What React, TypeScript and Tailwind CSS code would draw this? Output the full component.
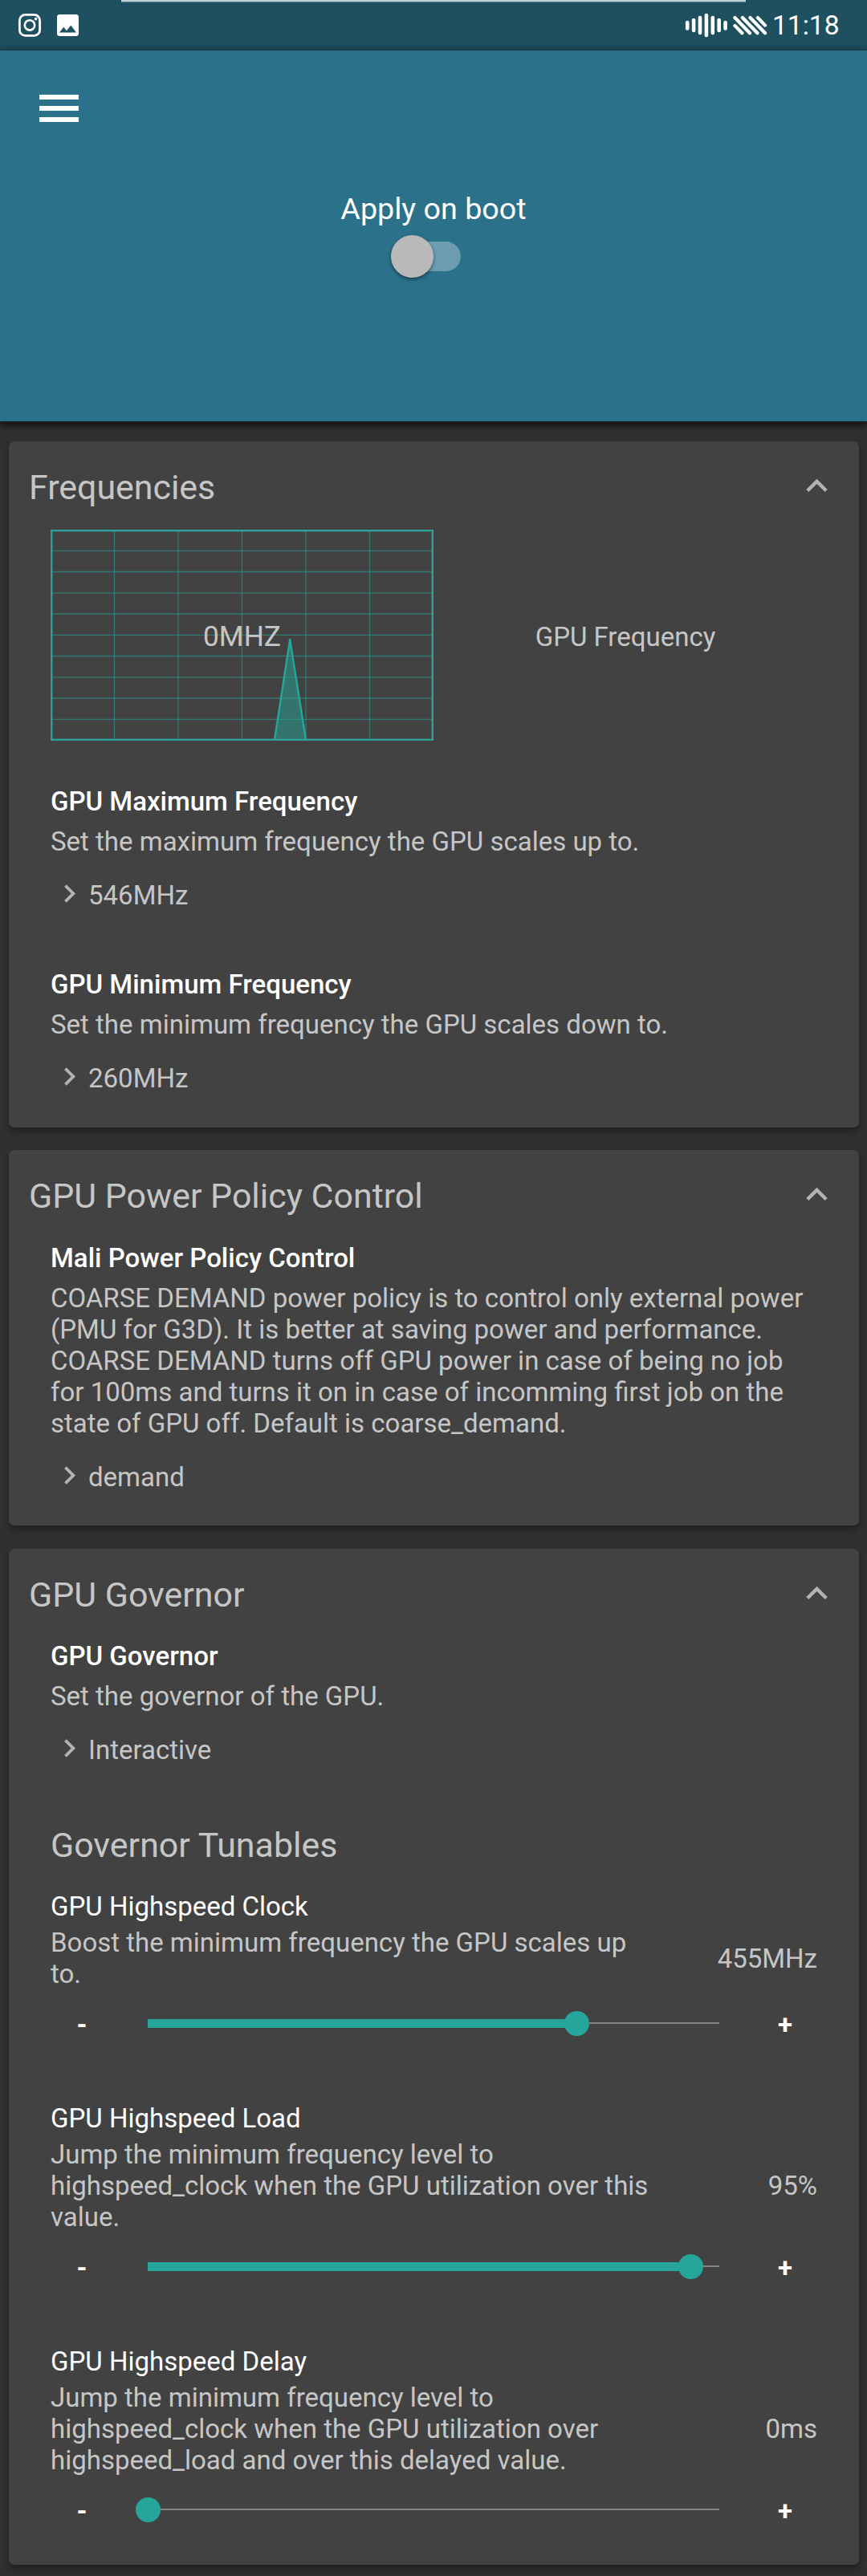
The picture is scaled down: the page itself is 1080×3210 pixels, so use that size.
import React from "react";

const Chevron = ({ up = false, className = "" }: { up?: boolean; className?: string }) => (
  <svg viewBox="0 0 24 24" fill="#b3b3b3" className={className}>
    <path
      d={
        up
          ? "M12 8l-6 6 1.41 1.41L12 10.83l4.59 4.58L18 14z"
          : "M10 6L8.59 7.41 13.17 12l-4.58 4.59L10 18l6-6z"
      }
    />
  </svg>
);

const StatusBar = () => (
  <div className="relative flex h-[63px] items-center bg-[#1e5060] pl-[23px] pr-[36px]">
    <div className="absolute left-[151px] top-0 h-[3px] w-[778px] border-b border-[#587c89] bg-[#c2d1d7]" />
    <svg className="h-[29px] w-[28px]" viewBox="0 0 28 29" fill="none" stroke="#fff">
      <rect x="1.4" y="1.4" width="25.2" height="26" rx="7" strokeWidth="2.8" />
      <circle cx="14" cy="14.4" r="6.2" strokeWidth="2.6" />
      <circle cx="21.6" cy="6.6" r="1.8" fill="#fff" stroke="none" />
    </svg>
    <svg className="ml-5 h-[27px] w-[27px]" viewBox="3 3 18 18" fill="#fff">
      <path d="M21 19V5c0-1.1-.9-2-2-2H5c-1.1 0-2 .9-2 2v14c0 1.1.9 2 2 2h14c1.1 0 2-.9 2-2zM8.5 13.5l2.5 3.01L14.5 12l4.5 6H5l3.5-4.5z" fillRule="evenodd" />
    </svg>
    <div className="grow" />
    <svg className="h-[32px] w-[104px]" viewBox="851.5 16 104 32" stroke="#fff" strokeWidth="4.6" strokeLinecap="round" fill="none">
      <path d="M855.7 28v7.5M863.6 25v13M871.5 22v19M879.4 19v25M887.3 22v19M895.2 25v13M903.1 28v7.5" />
      <path d="M914.9 31.9l9 9.4M914.9 22l18.6 19.3M924.4 22l18.6 19.3M934 22l18.6 19.3M943.4 22l9.2 9.6" strokeWidth="4.2" />
    </svg>
    <span className="ml-[6px] w-[82px] whitespace-nowrap text-[33.6px] leading-[40px] text-white">11:18</span>
  </div>
);

const Header = () => (
  <div className="relative z-10 flex h-[462px] flex-col items-center bg-[#2a7189] shadow-[0_3px_10px_2px_rgba(0,0,0,0.65)]">
    <div className="flex h-[174px] w-full flex-col gap-2 pl-[49px] pt-[55px]">
      <div className="h-[6px] w-[49px] bg-white" />
      <div className="h-[6px] w-[49px] bg-white" />
      <div className="h-[6px] w-[49px] bg-white" />
    </div>
    <div className="h-[46px] text-[37.7px] leading-[46px] text-white">Apply on boot</div>
    <div className="mt-[9px] flex h-[54px] w-[106px] items-center">
      <div className="relative h-[37px] w-[87px] rounded-full bg-[#6b9caf]">
        <div className="absolute -top-2 left-0 h-[53px] w-[53px] rounded-full bg-[#b9b9b9] shadow-[0_2px_4px_rgba(0,0,0,0.45)]" />
      </div>
    </div>
  </div>
);

const Card = ({ title, children }: { title: string; children: React.ReactNode }) => (
  <section className="rounded-[7px] bg-[#424242] shadow-[0_5px_9px_rgba(0,0,0,0.35)]">
    <div className="flex h-[110px] items-start justify-between pl-[25px] pr-[26px] pt-[32px]">
      <h2 className="text-[42.9px] leading-[50px]">{title}</h2>
      <Chevron up className="-mt-[3px] h-[53px] w-[53px]" />
    </div>
    <div className="px-[52px]">{children}</div>
  </section>
);

const SelectItem = ({ title, text, value }: { title: string; text: string; value: string }) => (
  <div>
    <h3 className="font-medium text-white">{title}</h3>
    <p className="mt-[11px] whitespace-pre">{text}</p>
    <div className="mt-7 flex h-[39px] items-center">
      <Chevron className="-mt-[4px] ml-px h-[45px] w-[45px]" />
      <span className="ml-px">{value}</span>
    </div>
  </div>
);

const SliderItem = ({ title, text, value, thumb }: { title: string; text: string; value: string; thumb: number }) => (
  <div>
    <h3 className="text-white">{title}</h3>
    <div className="mt-[6px] flex items-center justify-between">
      <p className="whitespace-pre">{text}</p>
      <span>{value}</span>
    </div>
    <div className="mt-[18px] flex h-[48px] items-center">
      <span className="w-[78px] pt-[2px] text-center font-bold text-white">-</span>
      <div className="relative ml-[43px] flex h-[31px] w-[712px] items-center">
        <div className="h-[11px] bg-[#26a69a]" style={{ width: thumb }} />
        <div className="h-[2px] grow bg-[#858585]" />
        <div className="absolute top-0 -ml-[15.5px] h-[31px] w-[31px] rounded-full bg-[#26a69a]" style={{ left: thumb }} />
      </div>
      <span className="ml-[43px] w-[78px] pt-[3px] text-center font-bold text-white">+</span>
    </div>
  </div>
);

const vLines = [79.5, 159, 238.5, 318, 397.5];
const hLines = [26.3, 52.5, 78.8, 105, 131.3, 157.5, 183.8, 210, 236.3];

const FrequencyChart = () => (
  <div className="relative h-[263px] w-[477px]">
    <svg className="absolute inset-0 h-full w-full" viewBox="0 0 477 263" fill="none">
      <g stroke="#26a69a" strokeOpacity="0.55" strokeWidth="1.3">
        {vLines.map((x) => (
          <path key={x} d={`M${x} 0V263`} />
        ))}
        {hLines.map((y) => (
          <path key={y} d={`M0 ${y}H477`} />
        ))}
      </g>
      <path d="M279 262L298.2 137L318 262z" fill="#26a69a" fillOpacity="0.5" />
      <path d="M279 262L298.2 137L318 262" stroke="#26a69a" strokeWidth="2.4" strokeLinejoin="round" />
      <rect x="1.2" y="1.2" width="474.6" height="260.6" stroke="#2ea095" strokeWidth="2.4" />
    </svg>
    <span className="absolute inset-0 flex items-center justify-center pt-[3px] text-[35.3px]">0MHZ</span>
  </div>
);

export default function App() {
  return (
    <div className="min-h-[3210px] w-[1080px] bg-[#303030] font-['Roboto',sans-serif] text-[33px] leading-[39px] text-[#c6c6c6]">
      <StatusBar />
      <Header />
      <main className="flex flex-col pl-[11px] pr-[10px] pt-[25px]">
        <Card title="Frequencies">
          <div className="flex">
            <FrequencyChart />
            <div className="flex grow items-center justify-center pt-[3px]">GPU Frequency</div>
          </div>
          <div className="flex flex-col gap-[72px] pb-[42px] pt-[56px]">
            <SelectItem title="GPU Maximum Frequency" text="Set the maximum frequency the GPU scales up to." value="546MHz" />
            <SelectItem title="GPU Minimum Frequency" text="Set the minimum frequency the GPU scales down to." value="260MHz" />
          </div>
        </Card>
        <div className="h-7" />
        <Card title="GPU Power Policy Control">
          <div className="pb-[41px] pt-[5px]">
            <SelectItem
              title="Mali Power Policy Control"
              text={
                "COARSE DEMAND power policy is to control only external power\n(PMU for G3D). It is better at saving power and performance.\nCOARSE DEMAND turns off GPU power in case of being no job\nfor 100ms and turns it on in case of incomming first job on the\nstate of GPU off. Default is coarse_demand."
              }
              value="demand"
            />
          </div>
        </Card>
        <div className="h-[29px]" />
        <Card title="GPU Governor">
          <div className="pb-[45px] pt-1">
            <SelectItem title="GPU Governor" text="Set the governor of the GPU." value="Interactive" />
            <h2 className="mb-8 mt-[74px] text-[42.9px] leading-[50px]">Governor Tunables</h2>
            <div className="flex flex-col gap-[75px]">
              <SliderItem title="GPU Highspeed Clock" text={"Boost the minimum frequency the GPU scales up\nto."} value="455MHz" thumb={534.5} />
              <SliderItem
                title="GPU Highspeed Load"
                text={"Jump the minimum frequency level to\nhighspeed_clock when the GPU utilization over this\nvalue."}
                value="95%"
                thumb={676}
              />
              <SliderItem
                title="GPU Highspeed Delay"
                text={"Jump the minimum frequency level to\nhighspeed_clock when the GPU utilization over\nhighspeed_load and over this delayed value."}
                value="0ms"
                thumb={0}
              />
            </div>
          </div>
        </Card>
      </main>
    </div>
  );
}
